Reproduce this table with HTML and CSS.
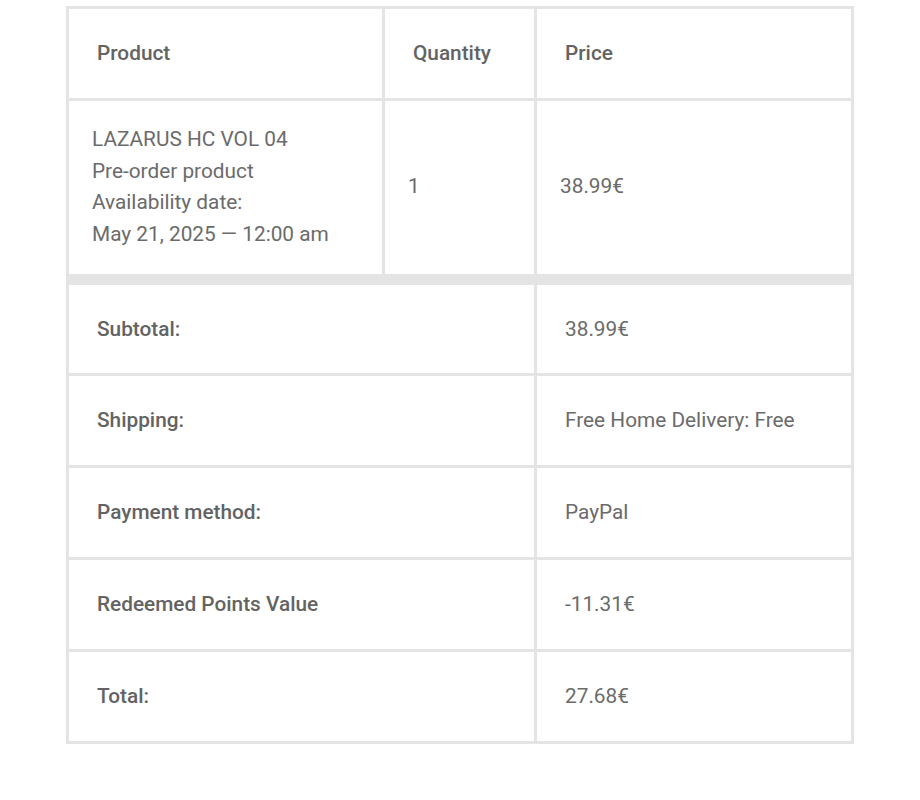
FILE: index.html
```html
<!DOCTYPE html>
<html lang="en">
<head>
<meta charset="utf-8">
<title>Order details</title>
<link rel="stylesheet" href="styles.css">
</head>
<body>
<table class="order-table">
  <thead>
    <tr>
      <th class="col-product">Product</th>
      <th class="col-qty">Quantity</th>
      <th class="col-price">Price</th>
    </tr>
  </thead>
  <tbody>
    <tr class="item-row">
      <td>LAZARUS HC VOL 04<br>Pre-order product<br>Availability date:<br>May 21, 2025 — 12:00 am</td>
      <td>1</td>
      <td>38.99€</td>
    </tr>
  </tbody>
  <tfoot>
    <tr>
      <th colspan="2">Subtotal:</th>
      <td>38.99€</td>
    </tr>
    <tr>
      <th colspan="2">Shipping:</th>
      <td>Free Home Delivery: Free</td>
    </tr>
    <tr>
      <th colspan="2">Payment method:</th>
      <td>PayPal</td>
    </tr>
    <tr>
      <th colspan="2">Redeemed Points Value</th>
      <td>-11.31€</td>
    </tr>
    <tr>
      <th colspan="2">Total:</th>
      <td>27.68€</td>
    </tr>
  </tfoot>
</table>
</body>
</html>
```

FILE: styles.css
```css
html, body {
  margin: 0;
  padding: 0;
  background: #ffffff;
}

body {
  font-family: Roboto, "Liberation Sans", Arial, sans-serif;
  font-size: 20.8px;
  line-height: 31.5px;
  color: #6b6b6b;
  padding-top: 6px;
}

.order-table {
  width: 788px;
  margin: 0 auto;
  border-collapse: separate;
  border-spacing: 0;
  border-top: 3px solid #e4e4e4;
  border-left: 3px solid #e4e4e4;
  table-layout: fixed;
}

.order-table th,
.order-table td {
  box-sizing: border-box;
  border-right: 3px solid #e4e4e4;
  border-bottom: 3px solid #e4e4e4;
  text-align: left;
  vertical-align: middle;
}

.order-table th {
  font-weight: 500;
  color: #636363;
  padding: 29px 28px 28.4px 28px;
}

.order-table thead th {
  padding-top: 29px;
  padding-bottom: 28.5px;
}

.col-product { width: 316px; }
.col-qty { width: 152px; }
.col-price { width: 317px; }

.item-row td {
  padding: 23px 23px 23.5px 23px;
  border-bottom-width: 11px;
}

.order-table tfoot td {
  padding: 29px 28px 28.4px 28px;
}
```
